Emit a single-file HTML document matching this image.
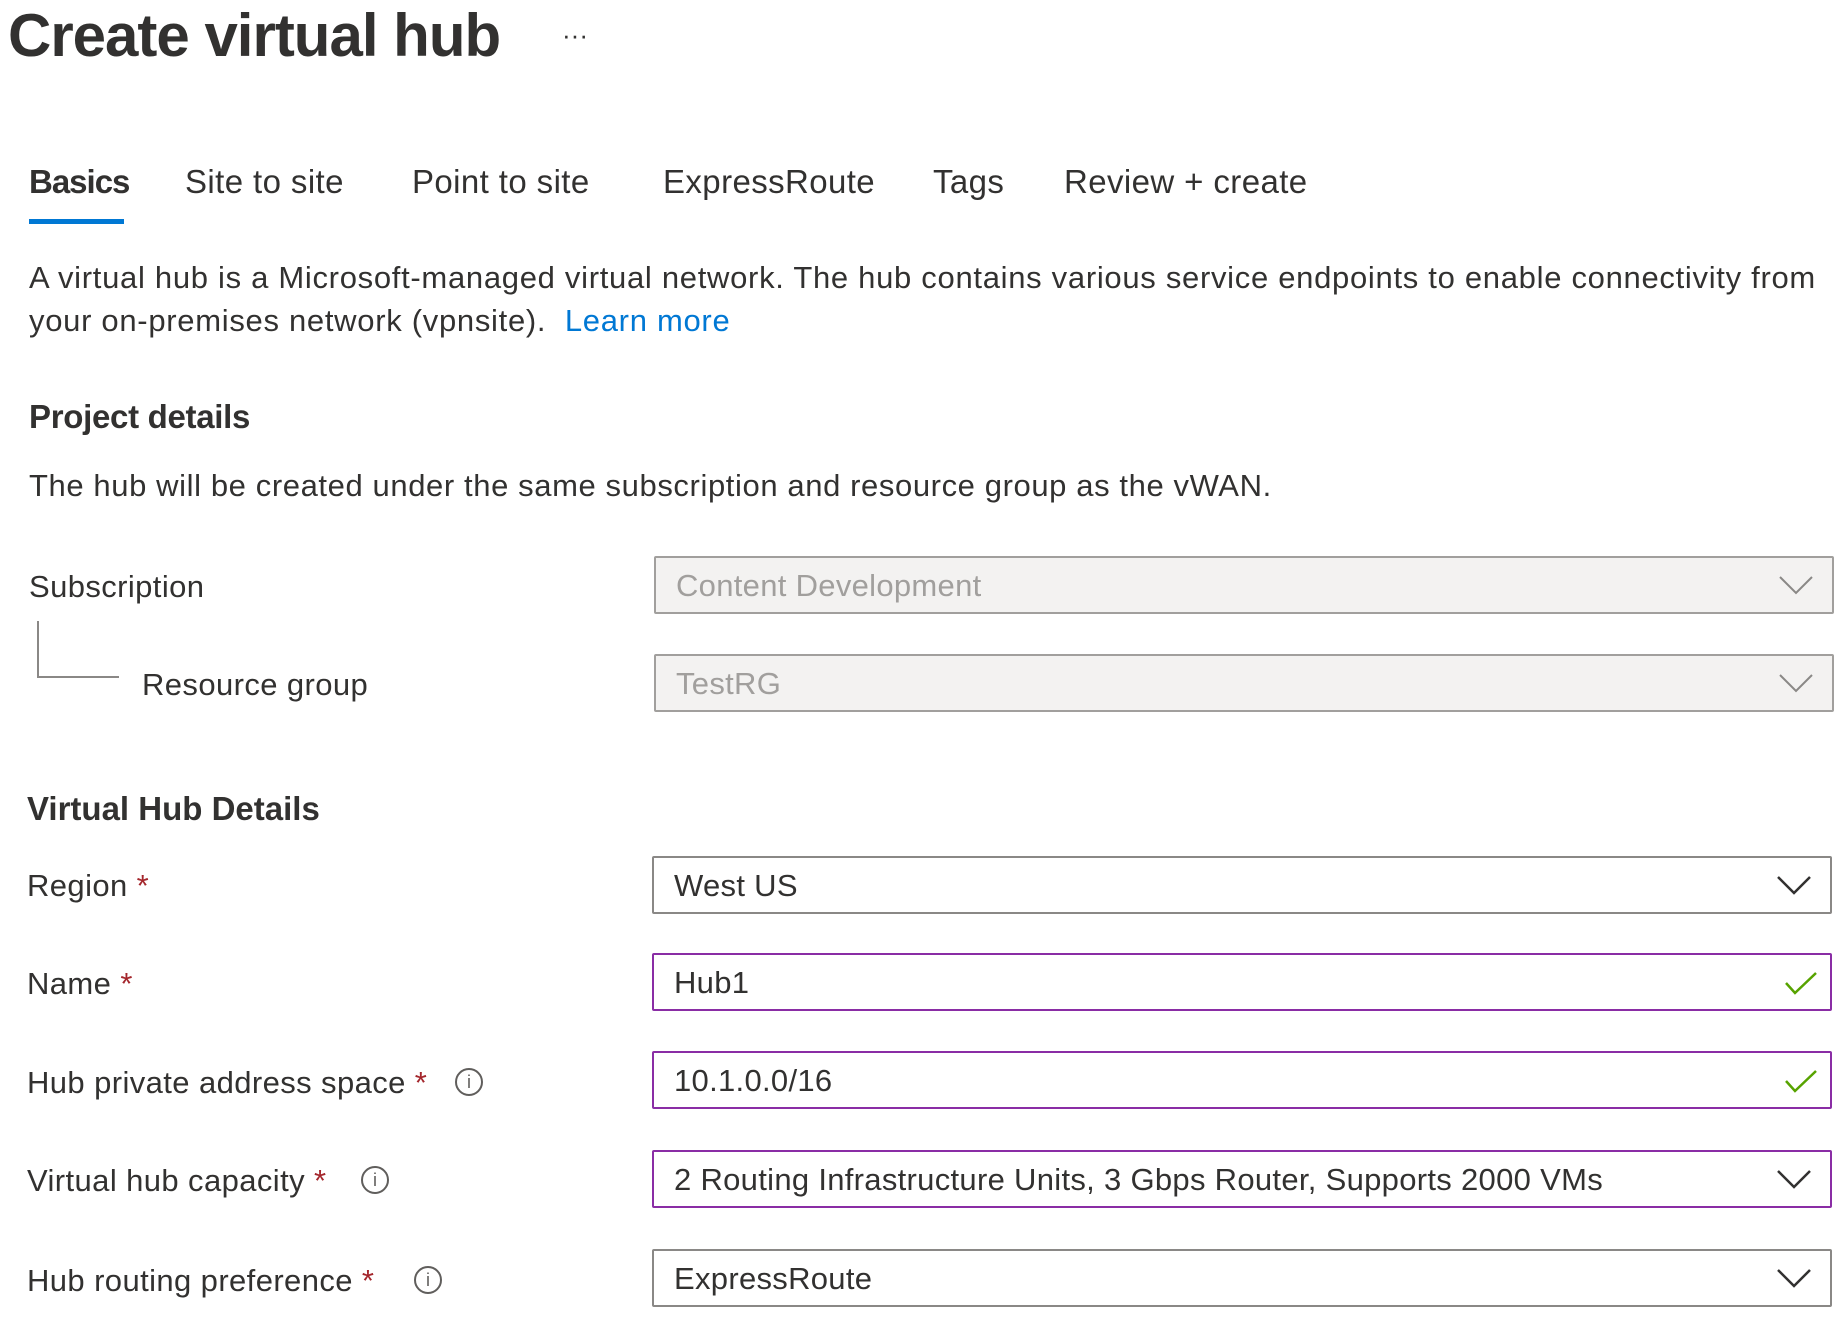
<!DOCTYPE html>
<html><head><meta charset="utf-8"><style>
*{margin:0;padding:0;box-sizing:border-box}
body{width:1845px;height:1322px;background:#fff;font-family:"Liberation Sans",sans-serif;color:#323130;position:relative;overflow:hidden}
.a{position:absolute;white-space:nowrap}
.t{font-size:31px;line-height:40px;letter-spacing:0.4px}
.box{position:absolute;height:58px;border:2px solid #8a8886;border-radius:2px;background:#fff}
.box.dis{background:#f3f2f1;border-color:#a19f9d;color:#a19f9d}
.box.p{border-color:#8a2da5}
.box span{position:absolute;left:20px;top:8px;font-size:31px;line-height:40px;letter-spacing:0.3px}
.box svg{position:absolute;right:18px;top:16px}
.box svg.ck{right:12px}
.star{color:#a4262c}
.info{position:absolute;width:28px;height:28px;border:2px solid #605e5c;border-radius:50%}
.info:after{content:"i";position:absolute;left:0;right:0;top:0;text-align:center;font-size:18px;line-height:24px;color:#605e5c}
</style></head><body>
<div class="a" style="left:8px;top:0px;font-size:60px;line-height:72px;font-weight:bold;color:#323130;letter-spacing:-1px">Create virtual hub</div>
<div class="a" style="left:562px;top:20px;font-size:26px;color:#323130">···</div>

<div class="a t" style="left:29px;top:162px;font-size:33px;font-weight:bold;letter-spacing:-1px">Basics</div>
<div class="a t" style="left:185px;top:162px;font-size:33px">Site to site</div>
<div class="a t" style="left:412px;top:162px;font-size:33px">Point to site</div>
<div class="a t" style="left:663px;top:162px;font-size:33px">ExpressRoute</div>
<div class="a t" style="left:933px;top:162px;font-size:33px">Tags</div>
<div class="a t" style="left:1064px;top:162px;font-size:33px">Review + create</div>
<div class="a" style="left:29px;top:219px;width:95px;height:5px;background:#0078d4"></div>

<div class="a t" style="left:29px;top:258px;letter-spacing:0.7px">A virtual hub is a Microsoft-managed virtual network. The hub contains various service endpoints to enable connectivity from</div>
<div class="a t" style="left:29px;top:301px;letter-spacing:0.7px">your on-premises network (vpnsite). &nbsp;<span style="color:#0078d4">Learn more</span></div>

<div class="a t" style="left:29px;top:397px;font-size:33px;font-weight:bold;letter-spacing:-0.3px">Project details</div>
<div class="a t" style="left:29px;top:466px;letter-spacing:0.6px">The hub will be created under the same subscription and resource group as the vWAN.</div>

<div class="a t" style="left:29px;top:567px">Subscription</div>
<div class="a" style="left:37px;top:621px;width:2px;height:56px;background:#8a8886"></div>
<div class="a" style="left:37px;top:676px;width:82px;height:2px;background:#8a8886"></div>
<div class="a t" style="left:142px;top:665px">Resource group</div>

<div class="box dis" style="left:654px;top:556px;width:1180px"><span>Content Development</span><svg width="36" height="22"><path d="M2 3 L18 19 L34 3" fill="none" stroke="#8a8886" stroke-width="2"/></svg></div>
<div class="box dis" style="left:654px;top:654px;width:1180px"><span>TestRG</span><svg width="36" height="22"><path d="M2 3 L18 19 L34 3" fill="none" stroke="#8a8886" stroke-width="2"/></svg></div>

<div class="a t" style="left:27px;top:789px;font-size:33px;font-weight:bold;letter-spacing:0px">Virtual Hub Details</div>

<div class="a t" style="left:27px;top:866px">Region <span class="star">*</span></div>
<div class="a t" style="left:27px;top:964px">Name <span class="star">*</span></div>
<div class="a t" style="left:27px;top:1063px">Hub private address space <span class="star">*</span></div>
<div class="info" style="left:455px;top:1068px"></div>
<div class="a t" style="left:27px;top:1161px">Virtual hub capacity <span class="star">*</span></div>
<div class="info" style="left:361px;top:1166px"></div>
<div class="a t" style="left:27px;top:1261px">Hub routing preference <span class="star">*</span></div>
<div class="info" style="left:414px;top:1266px"></div>

<div class="box" style="left:652px;top:856px;width:1180px"><span>West US</span><svg width="36" height="22"><path d="M2 3 L18 19 L34 3" fill="none" stroke="#323130" stroke-width="2.5"/></svg></div>
<div class="box p" style="left:652px;top:953px;width:1180px"><span>Hub1</span><svg class="ck" width="34" height="24"><path d="M2 12 L11 22 L32 2" fill="none" stroke="#57a300" stroke-width="2.5"/></svg></div>
<div class="box p" style="left:652px;top:1051px;width:1180px"><span>10.1.0.0/16</span><svg class="ck" width="34" height="24"><path d="M2 12 L11 22 L32 2" fill="none" stroke="#57a300" stroke-width="2.5"/></svg></div>
<div class="box p" style="left:652px;top:1150px;width:1180px"><span>2 Routing Infrastructure Units, 3 Gbps Router, Supports 2000 VMs</span><svg width="36" height="22"><path d="M2 3 L18 19 L34 3" fill="none" stroke="#323130" stroke-width="2.5"/></svg></div>
<div class="box" style="left:652px;top:1249px;width:1180px"><span>ExpressRoute</span><svg width="36" height="22"><path d="M2 3 L18 19 L34 3" fill="none" stroke="#323130" stroke-width="2.5"/></svg></div>
</body></html>
